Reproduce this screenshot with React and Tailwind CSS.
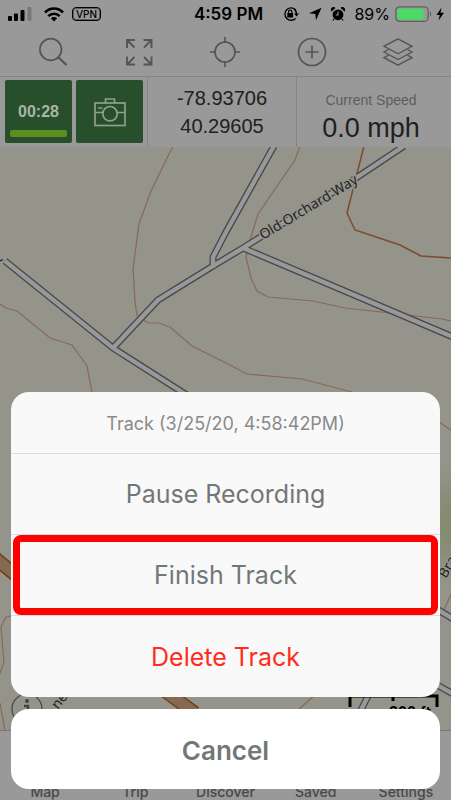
import React from "react";

const TOOL = "h-9 w-9 text-[#555]";

function StatusBar() {
  return (
    <div className="grid grid-cols-3 items-center pt-0.5 pr-0.5 pb-0.5 pl-2 text-black">
      <div className="flex items-center">
        <svg viewBox="0 0 24 14" className="h-3.5 w-6" aria-label="Signal">
          <rect x="0" y="9" width="4" height="5" rx="1" />
          <rect x="6" y="6.5" width="4" height="7.5" rx="1" />
          <rect x="12.5" y="3" width="4" height="11" rx="1" />
          <rect x="19.5" y="0" width="4" height="14" rx="1" fill="#777" />
        </svg>
        <svg viewBox="0 0 20 15" className="ml-3 h-[15px] w-5" aria-label="Wi-Fi">
          <g fill="none" stroke="#000" strokeWidth="2.6">
            <path d="M1 5.5C6 0.2 14 0.2 19 5.5" />
            <path d="M4.3 9.2C7.5 5.9 12.5 5.9 15.7 9.2" />
          </g>
          <path d="M6.8 11.3c1.8-1.7 4.6-1.7 6.4 0L10 14.6z" />
        </svg>
        <span className="ml-2 w-[29px] rounded border border-black text-center text-[10px] leading-3 font-medium ring-1 ring-black/40 ring-inset">VPN</span>
      </div>
      <div className="text-center text-[17px] leading-6 font-semibold whitespace-nowrap">4:59 PM</div>
      <div className="flex items-center justify-end gap-[9px] pr-1">
        <svg viewBox="0 0 16 16" className="h-4 w-4 shrink-0" aria-label="Orientation lock">
          <path d="M12.8 4A6.2 6.2 0 1 0 12.6 12.4M13.2 9A6.2 6.2 0 0 0 11 2.9" fill="none" stroke="#000" strokeWidth="1.4" />
          <path d="M11 7.5h5l-2.5 3z" />
          <rect x="4.3" y="7" width="5.8" height="4.5" rx=".6" />
          <path d="M5.5 7.3V5.8a1.7 1.7 0 0 1 3.4 0v1.5" fill="none" stroke="#000" strokeWidth="1.1" />
        </svg>
        <svg viewBox="0 0 14 14" className="h-3.5 w-3.5 shrink-0" aria-label="Location">
          <path d="M13.5.8L8 13.2 7.3 7 1 6.3z" />
        </svg>
        <svg viewBox="0 0 14 14" className="h-3.5 w-3.5 shrink-0" aria-label="Alarm">
          <circle cx="7" cy="7.8" r="5.4" />
          <path d="M.5 4.6a2.6 2.6 0 0 1 4-3.6zM13.5 4.6a2.6 2.6 0 0 0-4-3.6z" />
          <path d="M7 4.6V8H4.7" fill="none" stroke="#999" strokeWidth="1.1" />
          <path d="M3 12l-1 1.5M11 12l1 1.5" stroke="#000" strokeWidth="1.3" />
        </svg>
        <span className="text-base leading-6">89%</span>
        <svg viewBox="0 0 50 16" className="-ml-1 h-4 w-[50px] shrink-0" aria-label="Battery charging">
          <rect x=".8" y=".8" width="32.4" height="14.6" rx="4" fill="none" stroke="#606060" strokeWidth="1.3" />
          <rect x="2.5" y="2.5" width="26" height="11.2" rx="2" fill="#4cd964" />
          <path d="M35 5.5c1.6.6 1.6 4.4 0 5z" fill="#606060" />
          <path d="M46.5 1.5L41.5 9h3.3l-1.3 5.5L49 6.8h-3.5z" />
        </svg>
      </div>
    </div>
  );
}

function Toolbar() {
  return (
    <div className="flex items-center justify-around px-2.5 pt-1.5 pb-1.5">
      <button aria-label="Search" className={TOOL}>
        <svg viewBox="0 0 36 36" fill="none" stroke="currentColor" strokeWidth="1.7">
          <circle cx="15.7" cy="15.5" r="10.8" />
          <path d="M23.500 23.5L31.500 31" strokeWidth="2.2" />
        </svg>
      </button>
      <button aria-label="Full screen" className={TOOL}>
        <svg viewBox="0 0 36 36" fill="none" stroke="currentColor" strokeWidth="1.9">
          <path d="M6 14V6h8M6 6l7.500 7.500M22.500 6h8v8M30.500 6L23 13.500M6 22.500v8h8M6 30.500l7.500-7.500M30.500 22.500v8h-8M30.500 30.500L23 23" />
        </svg>
      </button>
      <button aria-label="Locate" className={TOOL}>
        <svg viewBox="0 0 36 36" fill="none" stroke="currentColor" strokeWidth="1.7">
          <circle cx="18" cy="18" r="10" />
          <path d="M18 3v6M18 27v6M3 18h6M27 18h6" />
        </svg>
      </button>
      <button aria-label="Add" className={TOOL}>
        <svg viewBox="0 0 36 36" fill="none" stroke="currentColor" strokeWidth="1.7">
          <circle cx="18" cy="18" r="13.5" />
          <path d="M18 11.500v13M11.500 18h13" />
        </svg>
      </button>
      <button aria-label="Layers" className={TOOL}>
        <svg viewBox="0 0 36 36" fill="none" stroke="currentColor" strokeWidth="1.4">
          <path d="M18 4.800L32 12.300 18 19.800 4 12.300z" />
          <path d="M8.500 15.500L4 18l14 7.500L32 18l-4.500-2.500" />
          <path d="M8.500 21.200L4 23.700l14 7.500 14-7.500-4.500-2.500" />
        </svg>
      </button>
    </div>
  );
}

function TrackPanel() {
  return (
    <div className="flex h-[71px] border-t border-[#848484] font-['Liberation_Sans',Arial,sans-serif] text-[#1c2220]">
      <div className="flex w-[148px] shrink-0 gap-1 border-r border-[#848484] pt-[3px] pb-1 pl-[5px]">
        <button className="flex w-[67px] flex-col items-center justify-end rounded-xs bg-[#284f2b] px-[5px] pb-1.5 text-base font-bold text-[#a9b5a6]">
          <span className="leading-7">00:28</span>
          <span className="mt-1 h-[7px] w-full rounded-xs bg-[#5c8d20]" />
        </button>
        <button aria-label="Take photo" className="flex w-[67px] items-center justify-center rounded-xs bg-[#284f2b] text-[#8fa08c]">
          <svg viewBox="0 0 32 30" className="h-[30px] w-8" fill="none" stroke="currentColor" strokeWidth="1.7">
            <rect x="1" y="6" width="30" height="22.5" />
            <path d="M11.500 6V2h9v4M1 15.500h7.800M23.200 15.500H31M4 11h4.500" />
            <circle cx="16" cy="16.7" r="7.2" />
          </svg>
        </button>
      </div>
      <div className="flex flex-1 flex-col items-center justify-center border-r border-[#848484] text-xl leading-7">
        <span>-78.93706</span>
        <span>40.29605</span>
      </div>
      <div className="flex flex-1 flex-col items-center justify-center pt-1 pr-1.5">
        <span className="text-sm leading-7 text-[#5e5e5e]">Current Speed</span>
        <span className="text-[27px] leading-7">0.0 mph</span>
      </div>
    </div>
  );
}

const ROADS =
  "M5 261L113 348L182 392L260 440M113 348L158 300L213 266L243 248L356 178L404 146M213 268V257L226 232L274 146M243 248L340 289L460 340M430 605L455 620M430 681L455 695M360 712L370 692";

function TrailMap() {
  return (
    <svg
      viewBox="0 147 451 583"
      preserveAspectRatio="xMidYMin slice"
      className="block size-full bg-[#94948b]"
      role="img"
      aria-label="Trail map"
    >
      <defs>
        <radialGradient id="woods">
          <stop offset="0.3" stopColor="#868c70" />
          <stop offset="1" stopColor="#94948b" />
        </radialGradient>
      </defs>
      <ellipse cx="450" cy="525" rx="30" ry="60" fill="url(#woods)" />
      <g fill="none" stroke="#866a58" strokeWidth="1.2">
        <path d="M173 146L151 191L139 224L133 269L135 302L137 315L148 323H159L170 327L192 346L226 363L247 374L302 379L352 392" />
        <path d="M0 304L6 308L17 311L50 338L72 345L87 366L92 392" />
        <path d="M300 146L295 160L258 214L251 237L246 257L251 278L257 291L268 297L313 301L345 308L390 313L442 319L452 321" />
        <path d="M438 421L452 431M443 612L452 592M16 615L6 617L1 627L4 662L-1 676M0 703L5 731M314 696L299 709" />
        <path d="M364 146L347 213L355 230L400 245L421 256L452 258" stroke="#7d4a2e" strokeWidth="1.5" />
      </g>
      <path d="M-5 558L60 612L173 697L195 713" fill="none" stroke="#6b4210" strokeWidth="14" />
      <path d="M-5 558L60 612L173 697L195 713" fill="none" stroke="#876850" strokeWidth="11" />
      <path d={ROADS} fill="none" stroke="#484848" strokeWidth="7" />
      <path d={ROADS} fill="none" stroke="#98989a" strokeWidth="4.4" />
      <g fontFamily="'Noto Sans', sans-serif" fontSize="14" fill="#242424" stroke="#94948b" strokeWidth="3" paintOrder="stroke">
        <text transform="translate(263 240) rotate(-31)">Old Orchard Way</text>
        <text transform="translate(446 579) rotate(-60)">Brad</text>
        <text transform="translate(58 710) rotate(-52)">ne</text>
        <text transform="translate(0 263) rotate(-50)">t</text>
      </g>
      <circle cx="27" cy="709" r="15" fill="none" stroke="#444" strokeWidth="1.2" />
      <path d="M24 706h4v10" fill="none" stroke="#444" strokeWidth="2.5" />
      <circle cx="27" cy="701" r="2" fill="#444" />
      <path d="M350 707V696H437V707M393 696v5" fill="none" stroke="#000" strokeWidth="3" />
      <text x="410" y="718" textAnchor="middle" fontFamily="'Liberation Sans', sans-serif" fontWeight="700" fontSize="16">300 ft</text>
    </svg>
  );
}

function ActionSheet() {
  return (
    <div role="dialog" aria-label="Track actions" className="absolute inset-x-[11px] bottom-[11px] flex flex-col gap-3 text-[25px] text-[#727777]">
      <div className="flex flex-col divide-y divide-[#dcdce0] rounded-[18px] bg-[#f9f9f9]">
        <h2 className="pt-[21px] pb-[18px] text-center text-lg leading-[22px] text-[#8a8a8a]">Track (3/25/20, 4:58:42PM)</h2>
        <button className="h-[81px] pt-0.5">Pause Recording</button>
        <button className="relative h-[81px] pt-0.5">
          Finish Track
          <span className="absolute inset-x-0.5 inset-y-0 rounded-lg border-[7px] border-[#ff0000]" />
        </button>
        <button className="h-[81px] pt-0.5 text-[#ff2d20]">Delete Track</button>
      </div>
      <button className="h-20 rounded-[18px] bg-white pt-0.5 text-[26px] font-semibold">Cancel</button>
    </div>
  );
}

export default function App() {
  return (
    <div className="relative flex h-screen flex-col overflow-hidden bg-[#999999] font-['Inter',sans-serif]">
      <StatusBar />
      <Toolbar />
      <TrackPanel />
      <main className="min-h-0 flex-1">
        <TrailMap />
      </main>
      <nav className="grid h-[70px] grid-cols-5 items-end border-t border-[#777] text-center text-sm leading-4 font-medium text-[#484848]">
        {["Map", "Trip", "Discover", "Saved", "Settings"].map((tab) => (
          <a key={tab} href={"#" + tab.toLowerCase()}>{tab}</a>
        ))}
      </nav>
      <ActionSheet />
    </div>
  );
}
